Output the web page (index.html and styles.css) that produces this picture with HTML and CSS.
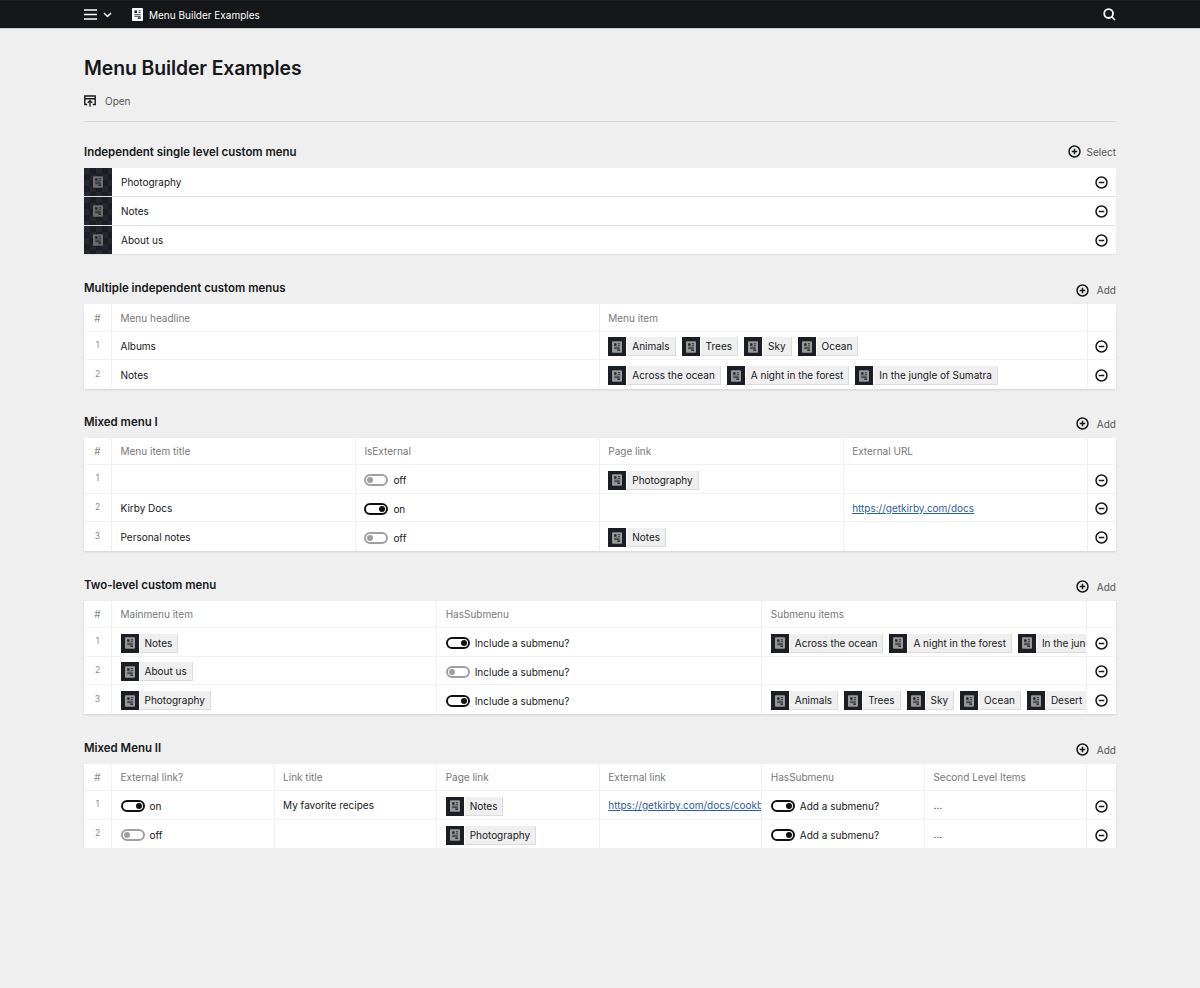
FILE: index.html
```html
<!DOCTYPE html>
<html lang="en">
<head>
<meta charset="utf-8">
<title>Menu Builder Examples</title>
<link rel="stylesheet" href="styles.css">
</head>
<body>
<svg class="defs" width="0" height="0" aria-hidden="true">
  <symbol id="doc" viewBox="0 0 12 14">
    <rect x="0" y="0" width="12" height="14" rx="1" fill="currentColor"/>
    <rect x="1.400" y="1.400" width="9.200" height="11.200" fill="currentColor" fill-opacity=".55"/>
    <rect x="2.600" y="2.600" width="2.800" height="2.800" fill="#1c1e25"/>
    <path d="M7 3h2.600M7 5h2.600M2.600 7.200h6.800M2.600 9h6.800" stroke="#1c1e25" stroke-width=".9" fill="none"/>
    <rect x="6.400" y="10" width="3.200" height="1.600" fill="#1c1e25"/>
  </symbol>
  <symbol id="minus" viewBox="0 0 14 14">
    <circle cx="7" cy="7" r="5.900" fill="none" stroke="currentColor" stroke-width="1.600"/>
    <path d="M4 7h6" stroke="currentColor" stroke-width="1.600"/>
  </symbol>
  <symbol id="plus" viewBox="0 0 14 14">
    <circle cx="7" cy="7" r="5.900" fill="none" stroke="currentColor" stroke-width="1.600"/>
    <path d="M4 7h6M7 4v6" stroke="currentColor" stroke-width="1.600"/>
  </symbol>
</svg>

<header class="topbar">
  <div class="wrap topbar-in">
    <svg class="ico-burger" viewBox="0 0 13 11"><path d="M0 1h13M0 5.500h13M0 10h13" stroke="currentColor" stroke-width="1.600" fill="none"/></svg>
    <svg class="ico-chev" viewBox="0 0 9 6"><path d="M1 1l3.500 3.500L8 1" stroke="currentColor" stroke-width="1.500" fill="none"/></svg>
    <svg class="ico-page"><use href="#doc"/></svg>
    <span class="topbar-title">Menu Builder Examples</span>
    <svg class="ico-search" viewBox="0 0 13 13"><circle cx="5.600" cy="5.600" r="4.400" fill="none" stroke="currentColor" stroke-width="1.800"/><path d="M9 9l3 3" stroke="currentColor" stroke-width="1.500"/></svg>
  </div>
</header>

<main class="wrap">
  <h1 class="title">Menu Builder Examples</h1>
  <div class="open-row">
    <svg class="ico-open" viewBox="0 0 12 12"><path d="M3.200 9.500H.8V1h10.400v8.500H8.800M.8 3.800h10.400" fill="none" stroke="currentColor" stroke-width="1.400"/><path d="M6 11.800V5.800M3.800 7.800L6 5.600l2.200 2.200" fill="none" stroke="currentColor" stroke-width="1.300"/></svg>
    <span>Open</span>
  </div>

  <section class="sec sec-first">
    <div class="sec-head"><h2>Independent single level custom menu</h2><span class="act act-select"><svg class="ico-plus"><use href="#plus"/></svg>Select</span></div>
    <ul class="list">
      <li class="list-row"><span class="list-thumb"><svg><use href="#doc"/></svg></span><span class="list-text">Photography</span><svg class="ico-minus"><use href="#minus"/></svg></li>
      <li class="list-row"><span class="list-thumb"><svg><use href="#doc"/></svg></span><span class="list-text">Notes</span><svg class="ico-minus"><use href="#minus"/></svg></li>
      <li class="list-row"><span class="list-thumb"><svg><use href="#doc"/></svg></span><span class="list-text">About us</span><svg class="ico-minus"><use href="#minus"/></svg></li>
    </ul>
  </section>

  <section class="sec sec-second">
    <div class="sec-head"><h2>Multiple independent custom menus</h2><span class="act"><svg class="ico-plus"><use href="#plus"/></svg>Add</span></div>
    <table class="tbl">
      <colgroup><col class="c-idx"><col class="c-half"><col class="c-half"><col class="c-end"></colgroup>
      <thead><tr><th class="idx">#</th><th>Menu headline</th><th>Menu item</th><th></th></tr></thead>
      <tbody>
        <tr><td class="idx">1</td><td>Albums</td><td><div class="chips">
          <span class="chip"><span class="thumb"><svg><use href="#doc"/></svg></span><span class="lab">Animals</span></span>
          <span class="chip"><span class="thumb"><svg><use href="#doc"/></svg></span><span class="lab">Trees</span></span>
          <span class="chip"><span class="thumb"><svg><use href="#doc"/></svg></span><span class="lab">Sky</span></span>
          <span class="chip"><span class="thumb"><svg><use href="#doc"/></svg></span><span class="lab">Ocean</span></span>
        </div></td><td class="end"><svg class="ico-minus"><use href="#minus"/></svg></td></tr>
        <tr><td class="idx">2</td><td>Notes</td><td><div class="chips">
          <span class="chip"><span class="thumb"><svg><use href="#doc"/></svg></span><span class="lab">Across the ocean</span></span>
          <span class="chip"><span class="thumb"><svg><use href="#doc"/></svg></span><span class="lab">A night in the forest</span></span>
          <span class="chip"><span class="thumb"><svg><use href="#doc"/></svg></span><span class="lab">In the jungle of Sumatra</span></span>
        </div></td><td class="end"><svg class="ico-minus"><use href="#minus"/></svg></td></tr>
      </tbody>
    </table>
  </section>

  <section class="sec sec-tall">
    <div class="sec-head"><h2>Mixed menu I</h2><span class="act"><svg class="ico-plus"><use href="#plus"/></svg>Add</span></div>
    <table class="tbl">
      <colgroup><col class="c-idx"><col class="c-quarter"><col class="c-quarter"><col class="c-quarter"><col class="c-quarter"><col class="c-end"></colgroup>
      <thead><tr><th class="idx">#</th><th>Menu item title</th><th>IsExternal</th><th>Page link</th><th>External URL</th><th></th></tr></thead>
      <tbody>
        <tr><td class="idx">1</td><td></td><td><span class="tog"><span class="sw"></span>off</span></td><td><div class="chips"><span class="chip"><span class="thumb"><svg><use href="#doc"/></svg></span><span class="lab">Photography</span></span></div></td><td></td><td class="end"><svg class="ico-minus"><use href="#minus"/></svg></td></tr>
        <tr><td class="idx">2</td><td>Kirby Docs</td><td><span class="tog"><span class="sw on"></span>on</span></td><td></td><td><a class="lnk" href="#">https://getkirby.com/docs</a></td><td class="end"><svg class="ico-minus"><use href="#minus"/></svg></td></tr>
        <tr><td class="idx">3</td><td>Personal notes</td><td><span class="tog"><span class="sw"></span>off</span></td><td><div class="chips"><span class="chip"><span class="thumb"><svg><use href="#doc"/></svg></span><span class="lab">Notes</span></span></div></td><td></td><td class="end"><svg class="ico-minus"><use href="#minus"/></svg></td></tr>
      </tbody>
    </table>
  </section>

  <section class="sec sec-tall">
    <div class="sec-head"><h2>Two-level custom menu</h2><span class="act"><svg class="ico-plus"><use href="#plus"/></svg>Add</span></div>
    <table class="tbl">
      <colgroup><col class="c-idx"><col class="c-third"><col class="c-third"><col class="c-third"><col class="c-end"></colgroup>
      <thead><tr><th class="idx">#</th><th>Mainmenu item</th><th>HasSubmenu</th><th>Submenu items</th><th></th></tr></thead>
      <tbody>
        <tr><td class="idx">1</td><td><div class="chips"><span class="chip"><span class="thumb"><svg><use href="#doc"/></svg></span><span class="lab">Notes</span></span></div></td><td><span class="tog"><span class="sw on"></span>Include a submenu?</span></td><td><div class="chips">
          <span class="chip"><span class="thumb"><svg><use href="#doc"/></svg></span><span class="lab">Across the ocean</span></span>
          <span class="chip"><span class="thumb"><svg><use href="#doc"/></svg></span><span class="lab">A night in the forest</span></span>
          <span class="chip"><span class="thumb"><svg><use href="#doc"/></svg></span><span class="lab">In the jungle of Sumatra</span></span>
        </div></td><td class="end"><svg class="ico-minus"><use href="#minus"/></svg></td></tr>
        <tr><td class="idx">2</td><td><div class="chips"><span class="chip"><span class="thumb"><svg><use href="#doc"/></svg></span><span class="lab">About us</span></span></div></td><td><span class="tog"><span class="sw"></span>Include a submenu?</span></td><td></td><td class="end"><svg class="ico-minus"><use href="#minus"/></svg></td></tr>
        <tr><td class="idx">3</td><td><div class="chips"><span class="chip"><span class="thumb"><svg><use href="#doc"/></svg></span><span class="lab">Photography</span></span></div></td><td><span class="tog"><span class="sw on"></span>Include a submenu?</span></td><td><div class="chips">
          <span class="chip"><span class="thumb"><svg><use href="#doc"/></svg></span><span class="lab">Animals</span></span>
          <span class="chip"><span class="thumb"><svg><use href="#doc"/></svg></span><span class="lab">Trees</span></span>
          <span class="chip"><span class="thumb"><svg><use href="#doc"/></svg></span><span class="lab">Sky</span></span>
          <span class="chip"><span class="thumb"><svg><use href="#doc"/></svg></span><span class="lab">Ocean</span></span>
          <span class="chip"><span class="thumb"><svg><use href="#doc"/></svg></span><span class="lab">Desert</span></span>
        </div></td><td class="end"><svg class="ico-minus"><use href="#minus"/></svg></td></tr>
      </tbody>
    </table>
  </section>

  <section class="sec">
    <div class="sec-head"><h2>Mixed Menu II</h2><span class="act"><svg class="ico-plus"><use href="#plus"/></svg>Add</span></div>
    <table class="tbl">
      <colgroup><col class="c-idx"><col class="c-sixth"><col class="c-sixth"><col class="c-sixth"><col class="c-sixth"><col class="c-sixth"><col class="c-sixth"><col class="c-end"></colgroup>
      <thead><tr><th class="idx">#</th><th>External link?</th><th>Link title</th><th>Page link</th><th>External link</th><th>HasSubmenu</th><th>Second Level Items</th><th></th></tr></thead>
      <tbody>
        <tr><td class="idx">1</td><td><span class="tog"><span class="sw on"></span>on</span></td><td>My favorite recipes</td><td><div class="chips"><span class="chip"><span class="thumb"><svg><use href="#doc"/></svg></span><span class="lab">Notes</span></span></div></td><td><a class="lnk" href="#">https://getkirby.com/docs/cookbook</a></td><td><span class="tog"><span class="sw on"></span>Add a submenu?</span></td><td>…</td><td class="end"><svg class="ico-minus"><use href="#minus"/></svg></td></tr>
        <tr><td class="idx">2</td><td><span class="tog"><span class="sw"></span>off</span></td><td></td><td><div class="chips"><span class="chip"><span class="thumb"><svg><use href="#doc"/></svg></span><span class="lab">Photography</span></span></div></td><td></td><td><span class="tog"><span class="sw on"></span>Add a submenu?</span></td><td>…</td><td class="end"><svg class="ico-minus"><use href="#minus"/></svg></td></tr>
      </tbody>
    </table>
  </section>
</main>
</body>
</html>
```

FILE: styles.css
```css
* { box-sizing: border-box; }
html, body { margin: 0; padding: 0; }
body {
  background: #efefef;
  color: #16171a;
  font-family: Inter, "Liberation Sans", sans-serif;
  font-size: 10px;
  line-height: 1.4;
}
.defs { position: absolute; }
.wrap { width: 1032px; margin: 0 auto; }

.topbar { height: 29px; background: #16171a; color: #fff; border-top: 1px solid #1f2023; border-bottom: 1px solid #cfcfcf; }
.topbar-in { height: 27px; display: flex; align-items: center; }
.ico-burger { width: 13px; height: 11px; }
.ico-chev { width: 9px; height: 6px; margin-left: 6px; }
.ico-page { width: 11px; height: 13px; margin-left: 20px; }
.topbar-title { margin: 1px 0 0 6px; }
.ico-search { width: 13px; height: 13px; margin-left: auto; }

.title { margin: 27px 0 0; font-size: 19.400px; font-weight: 600; line-height: 24px; letter-spacing: -0.1px; }
.open-row { display: flex; align-items: center; height: 16px; margin-top: 13px; color: #555; }
.ico-open { width: 12px; height: 12px; margin-right: 9px; color: #16171a; }
.open-row + .sec-first { border-top: 1px solid #d8d8d8; margin-top: 12px; padding-top: 23px; }

.sec { margin-top: 26px; }
.sec-second { margin-top: 27px; }
.sec-tall { padding-bottom: 1px; }
.sec-head { display: flex; justify-content: space-between; align-items: center; height: 17px; margin-bottom: 6px; }
.sec-head h2 { margin: 0 0 2px; font-size: 11.450px; font-weight: 600; }
.act { display: flex; align-items: center; color: #555; margin-top: 1px; }
.act-select { margin: 0 0 4px; }
.ico-plus { width: 13px; height: 13px; margin-right: 8px; color: #16171a; }
.act-select .ico-plus { margin-right: 6px; }

.list { list-style: none; margin: 0; padding: 0; display: flex; flex-direction: column; gap: 1px; }
.list-row { display: flex; align-items: center; height: 28px; background: #fff; box-shadow: 0 1px 1px rgba(0,0,0,.05); }
.list-thumb {
  width: 28px;
  height: 28px;
  color: #6f6f6f;
  display: flex;
  align-items: center;
  justify-content: center;
  background: conic-gradient(#1b1d24 25%, #25272e 0 50%, #1b1d24 0 75%, #25272e 0) 0 0 / 12px 12px;
}
.list-thumb svg { width: 10px; height: 12px; }
.list-text { margin: 0 0 1px 9px; flex: 1; }
.list-row .ico-minus { margin-right: 8px; }
.ico-minus { width: 13px; height: 13px; color: #16171a; display: block; }

.tbl { width: 1032px; table-layout: fixed; border-collapse: separate; border-spacing: 0; background: #fff; box-shadow: 0 1px 2px rgba(0,0,0,.12); }
.c-idx { width: 28px; }
.c-end { width: 28.500px; }
.c-half { width: 487.750px; }
.c-quarter { width: 243.875px; }
.c-third { width: 325.170px; }
.c-sixth { width: 162.580px; }
.tbl th, .tbl td { padding: 1px 0 0 8.500px; border-right: 1px solid #f2f2f2; border-bottom: 1px solid #f2f2f2; overflow: hidden; white-space: nowrap; text-align: left; font-weight: 400; }
.tbl th:last-child, .tbl td:last-child { border-right: 0; }
.tbl tbody tr:last-child td { border-bottom: 0; }
.tbl th { height: 27.500px; color: #777; }
.tbl td { height: 28.500px; }
.tbl .idx { padding-left: 0; text-align: center; color: #8a8a8a; font-size: 8.500px; }
.tbl th.idx { font-size: 10px; }
.tbl .end { padding: 3px 0 0 7.500px; }

.chips { display: flex; gap: 6px; margin-top: 2px; }
.chip { display: flex; flex: none; height: 19px; gap: 1px; }
.thumb { width: 18px; height: 19px; background: #1c1e25; color: #999; display: flex; align-items: center; justify-content: center; }
.thumb svg { width: 10px; height: 12px; }
.lab { display: flex; align-items: center; padding: 0 5px; background: #efefef; border-right: 1px solid #dcdcdc; border-bottom: 1px solid #dcdcdc; }

.tog { display: flex; align-items: center; gap: 5px; margin-top: 2px; }
.sw { position: relative; width: 24px; height: 12px; border: 2px solid #a0a0a0; border-radius: 6px; background: #fff; }
.sw::after { content: ""; position: absolute; top: 1px; left: 1px; width: 6px; height: 6px; border-radius: 50%; background: #a0a0a0; }
.sw.on { border-color: #111; }
.sw.on::after { left: auto; right: 1px; background: #111; }

.lnk { color: #2b5ea6; text-decoration: underline; }
```
